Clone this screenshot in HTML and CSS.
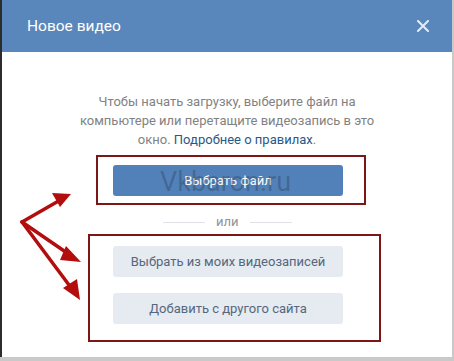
FILE: index.html
```html
<!DOCTYPE html>
<html lang="ru">
<head>
<meta charset="utf-8">
<title>Новое видео</title>
<link rel="stylesheet" href="styles.css">
</head>
<body>
<div class="screen">
  <div class="modal">
    <div class="header">
      <span class="title">Новое видео</span>
      <svg class="close" width="12" height="12" viewBox="0 0 12 12"><path d="M1 1L11 11M11 1L1 11" stroke="#e4ecf6" stroke-width="2" stroke-linecap="square"/></svg>
    </div>
    <div class="body">
      <p class="intro">Чтобы начать загрузку, выберите файл на компьютере или перетащите видеозапись в это окно. <span class="link">Подробнее о правилах</span>.</p>
      <div class="frame frame-one">
        <button class="btn btn-primary">Выбрать файл</button>
        <span class="watermark">Vkbaron.ru</span>
      </div>
      <div class="divider"><span class="line"></span><span class="or">или</span><span class="line"></span></div>
      <div class="frame frame-two">
        <button class="btn btn-secondary">Выбрать из моих видеозаписей</button>
        <button class="btn btn-secondary">Добавить с другого сайта</button>
      </div>
    </div>
    <svg class="arrows" width="100" height="130" viewBox="0 0 100 130">
      <g fill="#b30d0d" stroke="#b30d0d" stroke-width="3.5" stroke-linecap="round">
        <line x1="22" y1="42" x2="62" y2="19"/>
        <line x1="22" y1="42" x2="70" y2="75"/>
        <line x1="22" y1="42" x2="72" y2="109"/>
      </g>
      <g fill="#b30d0d">
        <polygon points="71,14 52,13 60,27"/>
        <polygon points="81,82 66,66 60,80"/>
        <polygon points="80,120 77,99 63,108"/>
      </g>
    </svg>
  </div>
</div>
</body>
</html>
```
FILE: styles.css
```css
html, body {
  margin: 0;
  padding: 0;
}
body {
  background: #c9c9c9;
  font-family: Roboto, "Noto Sans", "DejaVu Sans", sans-serif;
  width: 454px;
  height: 361px;
  overflow: hidden;
}
.screen {
  display: flex;
  height: 357px;
}
.modal {
  position: relative;
  width: 450px;
  height: 357px;
  background: #fff;
  border-left: 2px solid #2c2c2c;
  box-sizing: content-box;
}
.header {
  height: 52px;
  background: #5a87bb;
  display: flex;
  align-items: center;
  justify-content: space-between;
  padding: 0 23px 0 25px;
}
.title {
  color: #fff;
  font-size: 15.5px;
  margin-top: -1px;
}
.close {
  display: block;
  margin-top: -1px;
}
.body {
  display: flex;
  flex-direction: column;
  align-items: flex-start;
}
.intro {
  margin: 40px 0 0 74px;
  width: 302px;
  text-align: center;
  font-size: 13px;
  line-height: 19px;
  color: #828282;
}
.link {
  color: #2a5885;
}
.frame {
  position: relative;
  border: 2px solid #7d1717;
  display: flex;
  flex-direction: column;
}
.frame-one {
  margin: 6px 0 0 94px;
  padding: 8px 21px 7px 15px;
}
.frame-two {
  margin: 5px 0 0 86px;
  padding: 10px 36px 16px 23px;
  gap: 16px;
}
.btn {
  width: 230px;
  height: 31px;
  border: 0;
  border-radius: 3px;
  font-family: inherit;
  font-size: 13px;
  padding: 0;
}
.btn-primary {
  background: #5181b8;
  color: #fff;
}
.btn-secondary {
  background: #e5ebf1;
  color: #55677d;
}
.watermark {
  position: absolute;
  left: 62px;
  top: 9px;
  font-size: 27px;
  line-height: 32px;
  color: rgba(30, 40, 60, 0.28);
  pointer-events: none;
}
.divider {
  margin: 10px 0 0 161px;
  height: 14px;
  display: flex;
  align-items: center;
  gap: 11px;
}
.line {
  width: 42px;
  height: 1px;
  background: #dfe2e6;
}
.or {
  font-size: 13px;
  color: #939393;
  line-height: 14px;
}
.arrows {
  position: absolute;
  left: -2px;
  top: 180px;
}
```
